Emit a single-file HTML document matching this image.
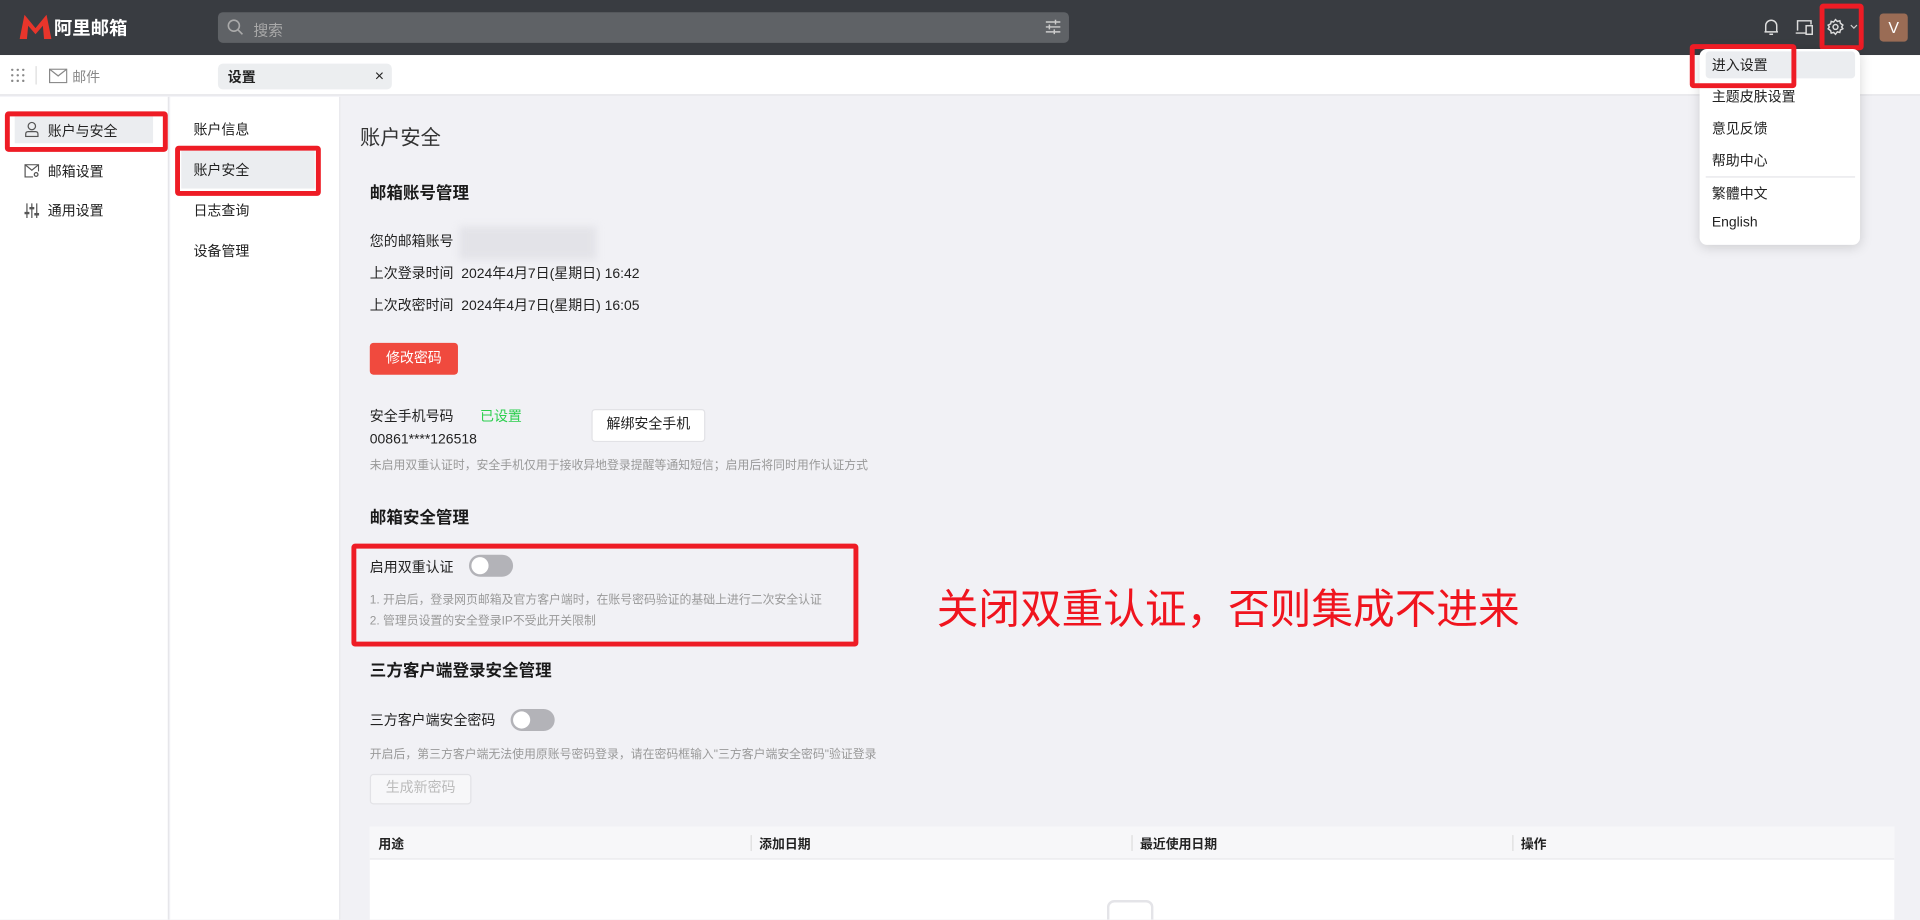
<!DOCTYPE html>
<html><head><meta charset="utf-8">
<style>
*{margin:0;padding:0;box-sizing:border-box}
html,body{width:1920px;height:919px;overflow:hidden;background:#f1f1f5}
#w{position:absolute;left:0;top:0;width:1568px;height:751px;transform:scale(1.22449);transform-origin:0 0;font-family:"Liberation Sans","Noto Sans CJK SC",sans-serif;color:#222;font-size:11.4px;background:#f1f1f5}
.a{position:absolute;white-space:nowrap}
.rb{position:absolute;border:4px solid #ee1c25;border-radius:3px}
.h{font-weight:bold;font-size:13.5px;color:#1a1a1a}
.g{color:#999;font-size:9.7px}
.tg{position:absolute;width:36px;height:18px;border-radius:9px;background:#b3b3b8}
.tg:after{content:"";position:absolute;left:2px;top:2px;width:14px;height:14px;border-radius:50%;background:#fff}
</style></head><body><div id="w">
<div class="a" style="left:0;top:0;width:1568px;height:45px;background:#393c41"></div>
<svg class="a" style="left:16px;top:12px" width="26" height="20" viewBox="0 0 26 20"><path d="M0 20 L4 0 L13 11 L22 0 L26 20 L20 20 L19 9 L13 16 L7 9 L6 20Z" fill="#e8352b"/></svg>
<div class="a" style="left:44px;top:12px;color:#fff;font-size:15px;font-weight:bold">阿里邮箱</div>
<div class="a" style="left:178px;top:10px;width:695px;height:25px;background:#5f6266;border-radius:4px"></div>
<svg class="a" style="left:185px;top:15px" width="14" height="14" viewBox="0 0 14 14"><circle cx="6" cy="6" r="4.5" fill="none" stroke="#aaa" stroke-width="1.3"/><path d="M9.5 9.5 L13 13" stroke="#aaa" stroke-width="1.3"/></svg>
<div class="a" style="left:207px;top:16px;color:#aaa;font-size:12px">搜索</div>
<svg class="a" style="left:854px;top:16px" width="12" height="12" viewBox="0 0 12 12" stroke="#ccc" stroke-width="1.2"><path d="M0 2H12M0 6H12M0 10H12"/><path d="M8 0V4M3 4V8M7 8V12" /></svg>
<svg class="a" style="left:1440px;top:15px" width="13" height="14" viewBox="0 0 13 14" fill="none" stroke="#ddd" stroke-width="1.2"><path d="M2 11V6a4.5 4.5 0 0 1 9 0v5H1h11M5 13h3"/></svg>
<svg class="a" style="left:1466px;top:16px" width="15" height="13" viewBox="0 0 15 13" fill="none" stroke="#ddd" stroke-width="1.2"><path d="M2 9V1h11v3M0.5 11h8"/><rect x="9" y="5" width="5" height="7"/></svg>
<svg class="a" style="left:1492px;top:15px" width="14" height="14" viewBox="0 0 14 14" fill="none" stroke="#ddd" stroke-width="1.2"><circle cx="7" cy="7" r="2"/><path d="M7 1l1.5 1.5 2-.5.5 2L13 5.5 12 7l1 1.5-2 1-.5 2-2-.5L7 13l-1.5-1.5-2 .5-.5-2L1 8.5 2 7 1 5.5l2-1 .5-2 2 .5z"/></svg>
<svg class="a" style="left:1511px;top:20px" width="6" height="4" viewBox="0 0 6 4"><path d="M0.5 0.5L3 3 5.5 0.5" stroke="#ccc" fill="none"/></svg>
<div class="rb" style="left:1486px;top:3px;width:36px;height:38px"></div>
<div class="a" style="left:1535px;top:11px;width:23px;height:23px;background:#9a6c55;border-radius:3px;color:#fff;text-align:center;line-height:23px;font-size:13px">V</div>

<div class="a" style="left:0;top:45px;width:1568px;height:33px;background:#fff;border-bottom:1px solid #e2e2e6"></div>
<svg class="a" style="left:9px;top:56px" width="11" height="11" viewBox="0 0 11 11" fill="#888"><circle cx="1" cy="1" r="1"/><circle cx="5.5" cy="1" r="1"/><circle cx="10" cy="1" r="1"/><circle cx="1" cy="5.5" r="1"/><circle cx="5.5" cy="5.5" r="1"/><circle cx="10" cy="5.5" r="1"/><circle cx="1" cy="10" r="1"/><circle cx="5.5" cy="10" r="1"/><circle cx="10" cy="10" r="1"/></svg>
<div class="a" style="left:29px;top:54px;width:1px;height:15px;background:#ddd"></div>
<svg class="a" style="left:40px;top:56px" width="15" height="12" viewBox="0 0 15 12" fill="none" stroke="#888"><rect x=".5" y=".5" width="14" height="11"/><path d="M.5 .5L7.5 6 14.5 .5"/></svg>
<div class="a" style="left:59px;top:55px;color:#888">邮件</div>
<div class="a" style="left:178px;top:52px;width:142px;height:21px;background:#eceef0;border-radius:4px"></div>
<div class="a" style="left:186px;top:55px;font-weight:bold">设置</div>
<div class="a" style="left:306px;top:54px;font-size:13px">×</div>

<div class="a" style="left:0;top:79px;width:138px;height:672px;background:#fff;border-right:1px solid #e6e6ea"></div>
<div class="a" style="left:12px;top:95px;width:113px;height:22px;background:#ebedf0"></div>
<svg class="a" style="left:20px;top:99px" width="12" height="13" viewBox="0 0 12 13" fill="none" stroke="#555"><circle cx="6" cy="4" r="3"/><path d="M1 12.5v-2q0-2 2-2h6q2 0 2 2v2z"/></svg>
<div class="a" style="left:39px;top:99px">账户与安全</div>
<svg class="a" style="left:20px;top:134px" width="12" height="11" viewBox="0 0 12 11" fill="none" stroke="#555"><path d="M7 10.5H.5V.5h11V6"/><path d="M.5 .5L6 5 11.5.5"/><circle cx="9.5" cy="8.5" r="1.5"/></svg>
<div class="a" style="left:39px;top:132px">邮箱设置</div>
<svg class="a" style="left:20px;top:166px" width="12" height="12" viewBox="0 0 12 12" stroke="#555"><path d="M2 0v12M6 0v12M10 0v12"/><path d="M0 8h4M4 4h4M8 9h4" stroke-width="2"/></svg>
<div class="a" style="left:39px;top:164px">通用设置</div>
<div class="rb" style="left:4px;top:91px;width:133px;height:33px"></div>

<div class="a" style="left:139px;top:79px;width:139px;height:672px;background:#fff;border-right:1px solid #e6e6ea"></div>
<div class="a" style="left:158px;top:98px">账户信息</div>
<div class="a" style="left:148px;top:122px;width:109px;height:32px;background:#ebedf0"></div>
<div class="a" style="left:158px;top:131px">账户安全</div>
<div class="a" style="left:158px;top:164px">日志查询</div>
<div class="a" style="left:158px;top:197px">设备管理</div>
<div class="rb" style="left:143px;top:119px;width:119px;height:41px"></div>

<div class="a" style="left:294px;top:99px;font-size:16.5px;color:#333">账户安全</div>
<div class="a h" style="left:302px;top:146px">邮箱账号管理</div>
<div class="a" style="left:302px;top:189px">您的邮箱账号</div>
<div class="a" style="left:375px;top:185px;width:112px;height:27px;background:#e3e3e8;filter:blur(3px)"></div>
<div class="a" style="left:302px;top:215px">上次登录时间&nbsp;&nbsp;2024年4月7日(星期日) 16:42</div>
<div class="a" style="left:302px;top:241px">上次改密时间&nbsp;&nbsp;2024年4月7日(星期日) 16:05</div>
<div class="a" style="left:302px;top:280px;width:72px;height:26px;background:#f04a3e;border-radius:3px;color:#fff;text-align:center;line-height:26px">修改密码</div>
<div class="a" style="left:302px;top:332px">安全手机号码</div>
<div class="a" style="left:392px;top:332px;color:#2ccf4e">已设置</div>
<div class="a" style="left:302px;top:353px">00861****126518</div>
<div class="a" style="left:483px;top:334px;width:93px;height:27px;background:#fff;border:1px solid #e2e2e6;border-radius:3px;text-align:center;line-height:25px">解绑安全手机</div>
<div class="a g" style="left:302px;top:372px">未启用双重认证时，安全手机仅用于接收异地登录提醒等通知短信；启用后将同时用作认证方式</div>
<div class="a h" style="left:302px;top:411px">邮箱安全管理</div>
<div class="a" style="left:302px;top:455px">启用双重认证</div>
<div class="tg" style="left:383px;top:453px"></div>
<div class="a g" style="left:302px;top:482px">1. 开启后，登录网页邮箱及官方客户端时，在账号密码验证的基础上进行二次安全认证</div>
<div class="a g" style="left:302px;top:499px">2. 管理员设置的安全登录IP不受此开关限制</div>
<div class="rb" style="left:287px;top:444px;width:414px;height:84px"></div>
<div class="a" style="left:765px;top:470px;font-size:34px;color:#f0141e">关闭双重认证，否则集成不进来</div>
<div class="a h" style="left:302px;top:536px">三方客户端登录安全管理</div>
<div class="a" style="left:302px;top:580px">三方客户端安全密码</div>
<div class="tg" style="left:417px;top:579px"></div>
<div class="a g" style="left:302px;top:608px">开启后，第三方客户端无法使用原账号密码登录，请在密码框输入"三方客户端安全密码"验证登录</div>
<div class="a" style="left:302px;top:632px;width:83px;height:25px;border:1px solid #e2e2e6;border-radius:3px;color:#bbb;text-align:center;line-height:23px;background:#f7f7f9">生成新密码</div>
<div class="a" style="left:302px;top:675px;width:1245px;height:76px;background:#fff"></div>
<div class="a" style="left:302px;top:675px;width:1245px;height:27px;background:#f7f7f9;border-bottom:1px solid #e8e8ec"></div>
<div class="a" style="left:309px;top:682px;font-size:10.5px;font-weight:bold">用途</div>
<div class="a" style="left:613px;top:682px;width:1px;height:13px;background:#ddd"></div>
<div class="a" style="left:620px;top:682px;font-size:10.5px;font-weight:bold">添加日期</div>
<div class="a" style="left:924px;top:682px;width:1px;height:13px;background:#ddd"></div>
<div class="a" style="left:931px;top:682px;font-size:10.5px;font-weight:bold">最近使用日期</div>
<div class="a" style="left:1235px;top:682px;width:1px;height:13px;background:#ddd"></div>
<div class="a" style="left:1242px;top:682px;font-size:10.5px;font-weight:bold">操作</div>
<div class="a" style="left:904px;top:735px;width:38px;height:16px;border:2px solid #e4e4e8;border-bottom:none;border-radius:6px 6px 0 0"></div>

<div class="a" style="left:1388px;top:40px;width:131px;height:160px;background:#fff;border-radius:6px;box-shadow:0 2px 10px rgba(0,0,0,.15)"></div>
<div class="a" style="left:1393px;top:42px;width:122px;height:22px;background:#ebedf0;border-radius:3px"></div>
<div class="a" style="left:1398px;top:45px">进入设置</div>
<div class="a" style="left:1398px;top:71px">主题皮肤设置</div>
<div class="a" style="left:1398px;top:97px">意见反馈</div>
<div class="a" style="left:1398px;top:123px">帮助中心</div>
<div class="a" style="left:1393px;top:144px;width:122px;height:1px;background:#e4e4e8"></div>
<div class="a" style="left:1398px;top:150px">繁體中文</div>
<div class="a" style="left:1398px;top:176px">English</div>
<div class="rb" style="left:1380px;top:36px;width:87px;height:36px"></div>
</div></body></html>
